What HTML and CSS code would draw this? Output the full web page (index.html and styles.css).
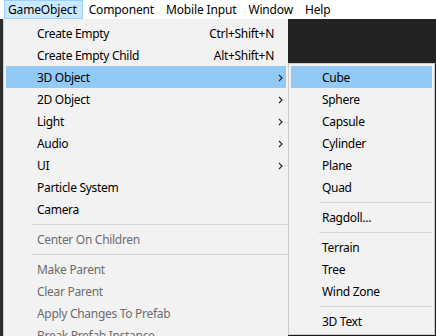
FILE: index.html
```html
<!DOCTYPE html>
<html lang="en">
<head>
  <meta charset="UTF-8">
  <meta name="viewport" content="width=device-width, initial-scale=1.0">
  <title>GameObject menu</title>
  <link rel="stylesheet" href="styles.css">
</head>
<body>
  <div class="menubar">
    <span class="top-item open">GameObject</span>
    <span class="top-item">Component</span>
    <span class="top-item">Mobile Input</span>
    <span class="top-item">Window</span>
    <span class="top-item">Help</span>
  </div>
  <div class="workspace">
    <ul class="menu main">
      <li class="item"><span>Create Empty</span><span class="key">Ctrl+Shift+N</span></li>
      <li class="item"><span>Create Empty Child</span><span class="key">Alt+Shift+N</span></li>
      <li class="item hover"><span>3D Object</span><svg class="arrow" width="5" height="8" viewBox="0 0 5 8"><path d="M1 1l3 3-3 3" fill="none" stroke="#222" stroke-width="1.1"/></svg></li>
      <li class="item"><span>2D Object</span><svg class="arrow" width="5" height="8" viewBox="0 0 5 8"><path d="M1 1l3 3-3 3" fill="none" stroke="#222" stroke-width="1.1"/></svg></li>
      <li class="item"><span>Light</span><svg class="arrow" width="5" height="8" viewBox="0 0 5 8"><path d="M1 1l3 3-3 3" fill="none" stroke="#222" stroke-width="1.1"/></svg></li>
      <li class="item"><span>Audio</span><svg class="arrow" width="5" height="8" viewBox="0 0 5 8"><path d="M1 1l3 3-3 3" fill="none" stroke="#222" stroke-width="1.1"/></svg></li>
      <li class="item"><span>UI</span><svg class="arrow" width="5" height="8" viewBox="0 0 5 8"><path d="M1 1l3 3-3 3" fill="none" stroke="#222" stroke-width="1.1"/></svg></li>
      <li class="item"><span>Particle System</span></li>
      <li class="item"><span>Camera</span></li>
      <li class="sep"></li>
      <li class="item off"><span>Center On Children</span></li>
      <li class="sep"></li>
      <li class="item off"><span>Make Parent</span></li>
      <li class="item off"><span>Clear Parent</span></li>
      <li class="item off"><span>Apply Changes To Prefab</span></li>
      <li class="item off"><span>Break Prefab Instance</span></li>
    </ul>
    <ul class="menu sub">
      <li class="item hover"><span>Cube</span></li>
      <li class="item"><span>Sphere</span></li>
      <li class="item"><span>Capsule</span></li>
      <li class="item"><span>Cylinder</span></li>
      <li class="item"><span>Plane</span></li>
      <li class="item"><span>Quad</span></li>
      <li class="sep"></li>
      <li class="item"><span>Ragdoll...</span></li>
      <li class="sep"></li>
      <li class="item"><span>Terrain</span></li>
      <li class="item"><span>Tree</span></li>
      <li class="item"><span>Wind Zone</span></li>
      <li class="sep"></li>
      <li class="item"><span>3D Text</span></li>
    </ul>
  </div>
</body>
</html>
```

FILE: styles.css
```css
* {
  box-sizing: border-box;
}
html, body {
  height: 100%;
}
body {
  margin: 0;
  overflow: hidden;
  background: #232323;
  font-family: "Noto Sans", "Open Sans", sans-serif;
  font-size: 12px;
  color: #000;
}
.menubar {
  display: flex;
  height: 19px;
  padding-left: 4px;
  background: #fff;
  letter-spacing: -0.15px;
}
.top-item {
  display: flex;
  align-items: center;
  padding: 0 5px 1px 3px;
  margin-right: 2px;
  border: 1px solid transparent;
  line-height: 17px;
}
.top-item.open {
  background: #cce8ff;
  border-color: #99d1ff;
}
.workspace {
  display: flex;
  align-items: flex-start;
  height: calc(100% - 19px);
  border-left: 3px solid #2d2d2d;
}
.menu {
  list-style: none;
  margin: 0;
  background: #f2f2f2;
  letter-spacing: -0.3px;
}
.main {
  width: 285px;
  height: 100%;
  padding: 3px 2px 0 2px;
  border-left: 1px solid #cfcfcf;
}
.sub {
  width: 147px;
  margin-top: 44px;
  padding: 2px;
  border: 1px solid #cccccc;
  box-shadow: 2px 2px 2px rgba(0, 0, 0, 0.25);
}
.item {
  display: flex;
  align-items: center;
  height: 22px;
  padding-top: 1px;
  padding-left: 31px;
  white-space: nowrap;
}
.item.hover {
  background: #91c9f7;
}
.item.off {
  color: #6d6d6d;
}
.key {
  margin-left: auto;
  margin-right: 12px;
}
.arrow {
  margin-left: auto;
  margin-right: 3px;
}
.sep {
  height: 8px;
  margin-left: 26px;
  margin-right: -2px;
  padding-top: 4px;
}
.sep::before {
  content: "";
  display: block;
  height: 1px;
  background: #d7d7d7;
}
.sub .sep {
  margin-left: 28px;
  margin-right: 0;
}
```
